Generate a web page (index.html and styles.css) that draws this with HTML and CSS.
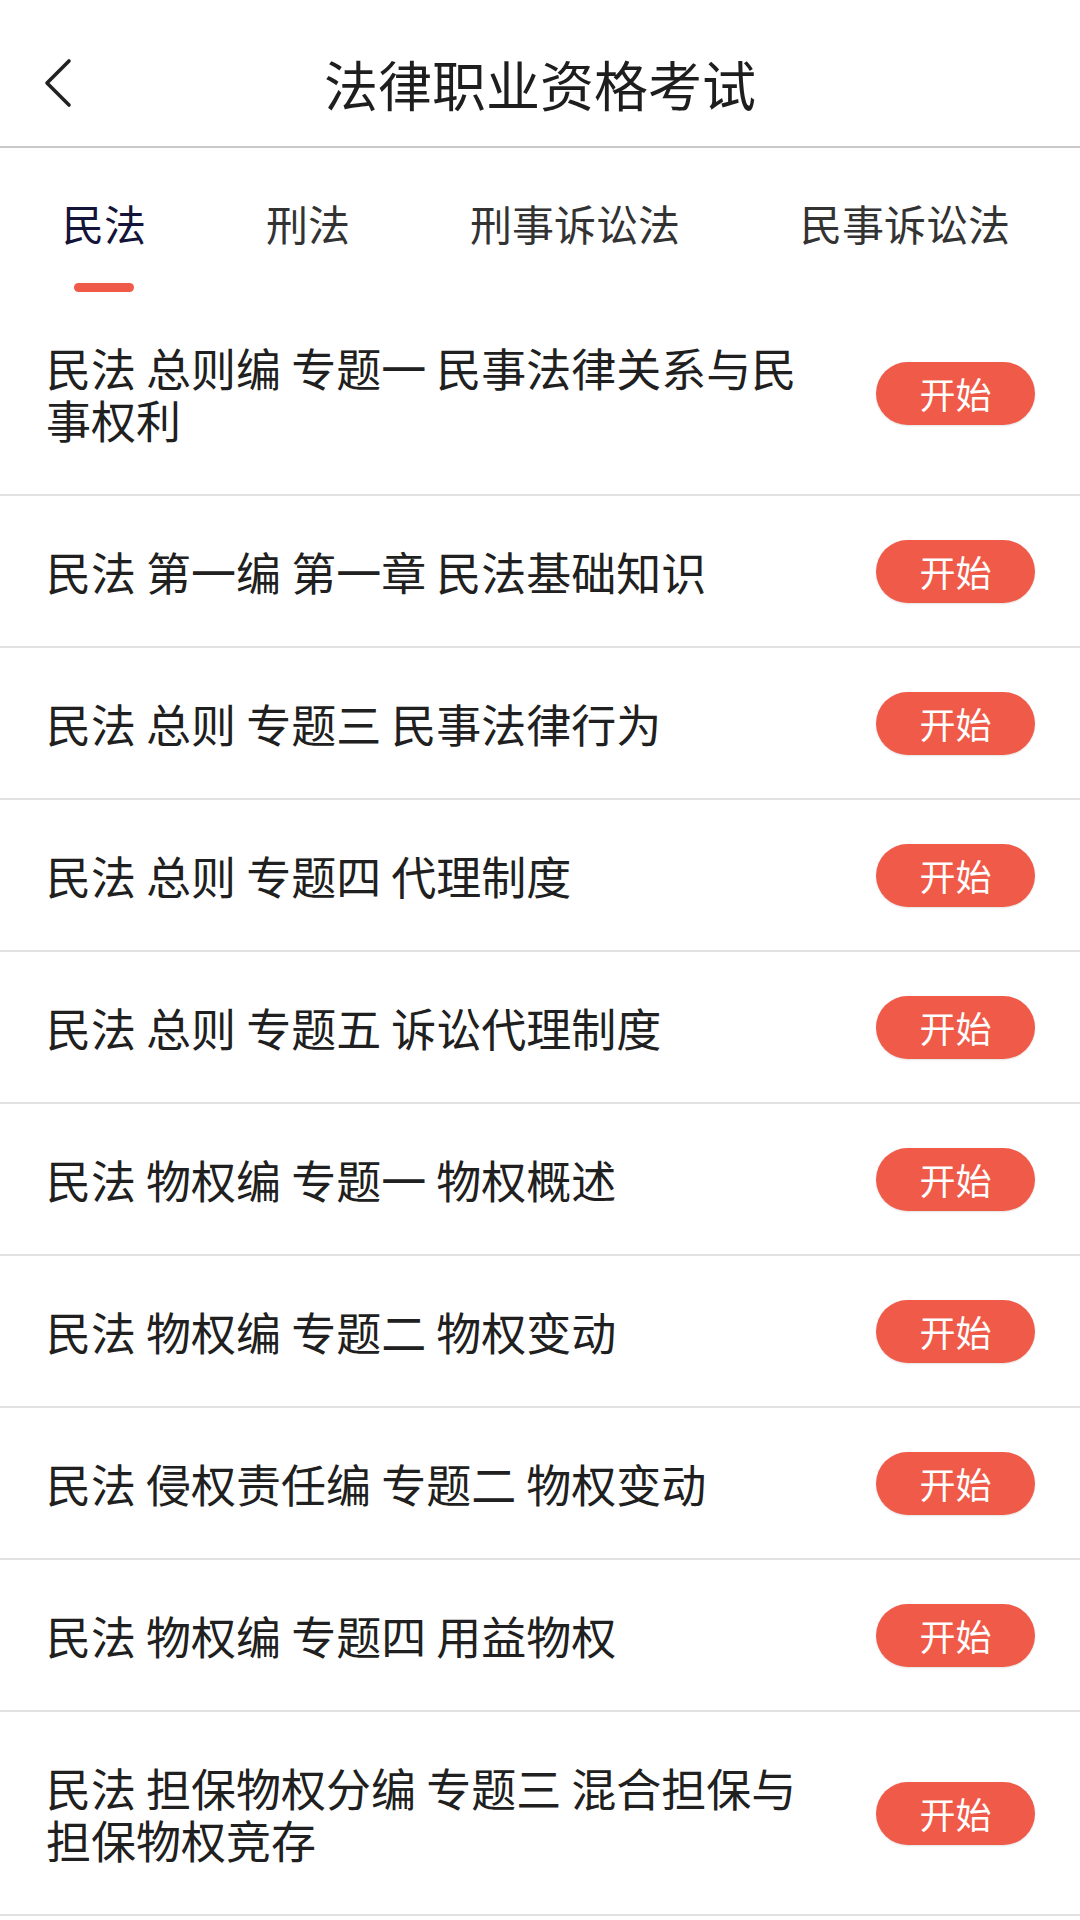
FILE: index.html
```html
<!DOCTYPE html>
<html lang="zh-CN">
<head>
<meta charset="utf-8">
<title>法律职业资格考试</title>
<link rel="stylesheet" href="styles.css">
</head>
<body>
<div class="page">
  <header class="header">
    <div class="back">
      <svg width="30" height="52" viewBox="0 0 30 52"><path d="M25 3 L3 25 L25 47" fill="none" stroke="#222" stroke-width="3.6" stroke-linecap="round" stroke-linejoin="round"/></svg>
    </div>
    <h1 class="title">法律职业资格考试</h1>
    <div class="spacer"></div>
  </header>
  <nav class="tabs">
    <div class="tab active"><span class="tab-text">民法</span><span class="indicator"></span></div>
    <div class="tab"><span class="tab-text">刑法</span></div>
    <div class="tab"><span class="tab-text">刑事诉讼法</span></div>
    <div class="tab"><span class="tab-text">民事诉讼法</span></div>
  </nav>
  <ul class="list">
    <li class="row"><span class="row-text">民法 总则编 专题一 民事法律关系与民事权利</span><button class="start">开始</button></li>
    <li class="row"><span class="row-text">民法 第一编 第一章 民法基础知识</span><button class="start">开始</button></li>
    <li class="row"><span class="row-text">民法 总则 专题三 民事法律行为</span><button class="start">开始</button></li>
    <li class="row"><span class="row-text">民法 总则 专题四 代理制度</span><button class="start">开始</button></li>
    <li class="row"><span class="row-text">民法 总则 专题五 诉讼代理制度</span><button class="start">开始</button></li>
    <li class="row"><span class="row-text">民法 物权编 专题一 物权概述</span><button class="start">开始</button></li>
    <li class="row"><span class="row-text">民法 物权编 专题二 物权变动</span><button class="start">开始</button></li>
    <li class="row"><span class="row-text">民法 侵权责任编 专题二 物权变动</span><button class="start">开始</button></li>
    <li class="row"><span class="row-text">民法 物权编 专题四 用益物权</span><button class="start">开始</button></li>
    <li class="row"><span class="row-text">民法 担保物权分编 专题三 混合担保与担保物权竞存</span><button class="start">开始</button></li>
  </ul>
</div>
</body>
</html>
```
FILE: styles.css
```css
* { box-sizing: border-box; }
html, body {
  margin: 0;
  padding: 0;
  background: #ffffff;
}
body {
  width: 1080px;
  height: 1920px;
  overflow: hidden;
  font-family: "Noto Sans CJK SC", "Noto Sans", sans-serif;
  color: #222222;
}
.header {
  height: 148px;
  border-bottom: 2px solid #c9c9c9;
  display: grid;
  grid-template-columns: 1fr auto 1fr;
  align-items: center;
  padding-top: 22px;
}
.back {
  padding-left: 44px;
  display: flex;
  align-items: center;
}
.back svg { display: block; }
.title {
  margin: 0;
  font-size: 54px;
  font-weight: 400;
  line-height: 60px;
  color: #1e1e1e;
}
.tabs {
  height: 144px;
  display: flex;
  align-items: flex-start;
  gap: 120px;
  padding-left: 62px;
}
.tab {
  display: flex;
  flex-direction: column;
  align-items: center;
  padding-top: 54px;
}
.tab-text {
  font-size: 42px;
  line-height: 42px;
  color: #333333;
  white-space: nowrap;
}
.tab.active .tab-text { color: #14143a; }
.indicator {
  display: block;
  width: 60px;
  height: 9px;
  margin-top: 39px;
  border-radius: 5px;
  background: #f05a48;
}
.list {
  list-style: none;
  margin: 0;
  padding: 0;
}
.row {
  display: flex;
  align-items: center;
  padding: 0 45px 0 46px;
  border-bottom: 2px solid #e2e2e2;
}
.row-text {
  flex: 1;
  max-width: 770px;
  padding: 50px 0 48px;
  font-size: 45px;
  line-height: 52px;
  color: #202020;
}
.start {
  margin-left: auto;
  flex-shrink: 0;
  width: 159px;
  height: 63px;
  border: none;
  border-radius: 32px;
  background: #f05a48;
  color: #ffffff;
  font-family: "Noto Sans CJK SC", "Noto Sans", sans-serif;
  font-size: 36px;
  line-height: 63px;
  padding: 0;
  box-shadow: 0 1px 2px rgba(0,0,0,0.12);
}
```
